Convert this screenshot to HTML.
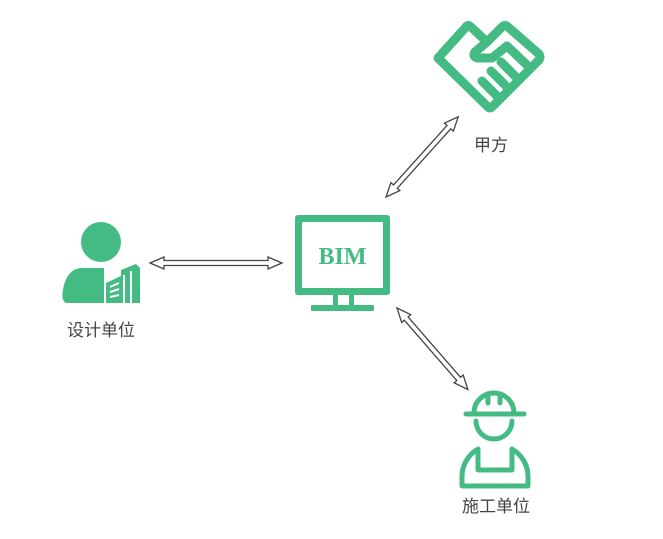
<!DOCTYPE html>
<html><head><meta charset="utf-8"><style>
body{margin:0;width:663px;height:539px;background:#fff;overflow:hidden;position:relative;font-family:"Liberation Sans","Noto Sans CJK SC",sans-serif}
.t{position:absolute;font-size:17px;color:#444;white-space:nowrap;transform:translateX(-50%)}
</style></head><body>
<svg width="663" height="539" style="position:absolute;left:0;top:0">
<defs>
<polygon id="ar" points="0,0 14,-6 14,-2.5 94,-2.5 94,-6 108,0 94,6 94,2.5 14,2.5 14,6" fill="#fff" stroke="#444" stroke-width="1.3" stroke-linejoin="miter"/>
</defs>
<polygon points="150,263 164,257 164,260.5 268,260.5 268,257 282,263 268,269 268,265.5 164,265.5 164,269" fill="#fff" stroke="#444" stroke-width="1.3"/>
<use href="#ar" transform="translate(386,197) rotate(-48)"/>
<use href="#ar" transform="translate(397,308) rotate(49)"/>
<g fill="#43bb82">
<rect x="295" y="215" width="95" height="80" rx="3"/>
<rect x="333" y="293" width="5" height="13"/><rect x="349" y="293" width="5" height="13"/>
<rect x="311" y="305" width="63" height="6" rx="1"/>
</g>
<rect x="302" y="222" width="81" height="66" fill="#fff"/>
<text x="342.5" y="264" text-anchor="middle" font-family="Liberation Serif,serif" font-weight="bold" font-size="24" fill="#43bb82">BIM</text>
<g fill="#43bb82">
<circle cx="101" cy="242" r="20"/>
<path d="M66,303 Q60,300 64,285 Q68,270 80,268 L104,268 L104,303 Z"/>
<path d="M106,303 L106,283 L121,276 L121,270 L136,264 L140,268 L140,303 Z"/>
</g>
<g stroke="#fff" stroke-width="2">
<line x1="110" y1="287" x2="119" y2="283"/><line x1="110" y1="292" x2="119" y2="289"/><line x1="110" y1="297" x2="119" y2="295"/>
<line x1="124" y1="275" x2="124" y2="303"/><line x1="131" y1="271" x2="131" y2="303"/>
</g>
<g fill="none" stroke="#43bb82" stroke-width="9" stroke-linejoin="round" stroke-linecap="round">
<path d="M438,58 L466,27 Q468,24 471,27 L487,42 L502,27 Q505,24 508,27 L539,54 Q541,57 539,60 L492,107 Q490,109 488,107 Z"/>
<path d="M487,42 L475,52 Q472,57 478,58 L492,58 L507,46"/>
<line x1="507" y1="46" x2="530" y2="68"/>
<line x1="501" y1="62" x2="518" y2="79"/>
<line x1="491" y1="71" x2="508" y2="88"/>
<line x1="482" y1="81" x2="498" y2="97"/>
</g>
<g fill="none" stroke="#43bb82" stroke-width="5" stroke-linecap="round">
<path d="M474,413 A20,20 0 0 1 514,413"/>
<line x1="466" y1="414" x2="524" y2="414"/>
<path d="M476,421 A18,18 0 0 0 512,421"/>
<path d="M462,486 L462,478 A32,32 0 0 1 478,449 L478,470 L512,470 L512,449 A32,32 0 0 1 528,478 L528,486 Z" stroke-linejoin="round"/>
<line x1="488" y1="394" x2="488" y2="403"/><line x1="500" y1="394" x2="500" y2="403"/>
</g>
</svg>
<div class="t" style="left:491px;top:131px">甲方</div>
<div class="t" style="left:101px;top:316px">设计单位</div>
<div class="t" style="left:496px;top:492px">施工单位</div>
</body></html>
